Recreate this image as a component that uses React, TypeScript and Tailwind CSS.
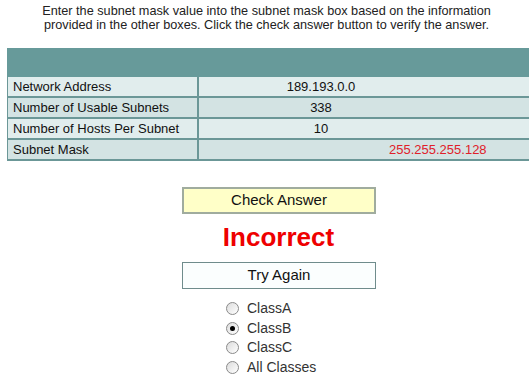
import { useState } from "react";

const rows = [
  { label: "Network Address", value: "189.193.0.0" },
  { label: "Number of Usable Subnets", value: "338" },
  { label: "Number of Hosts Per Subnet", value: "10" },
];

const classes = ["ClassA", "ClassB", "ClassC", "All Classes"];

function Radio({ checked }: { checked: boolean }) {
  return (
    <span className="w-[13px] h-[13px] rounded-full border border-[#8a8a8a] bg-gradient-to-br from-[#dcdcdc] to-white flex items-center justify-center">
      {checked && <span className="w-[5px] h-[5px] rounded-full bg-black" />}
    </span>
  );
}

export default function App() {
  const [picked, setPicked] = useState("ClassB");

  return (
    <div className="w-[529px] h-[379px] bg-white overflow-hidden font-['Liberation_Sans',Arial,sans-serif] text-[13px]">
      <p className="pt-[4px] pl-[4px] text-center text-[12.7px] leading-[14px] text-[#222]">
        Enter the subnet mask value into the subnet mask box based on the information
        <br />
        provided in the other boxes. Click the check answer button to verify the answer.
      </p>

      <div className="ml-[7px] mt-[16px] w-[530px]">
        <div className="h-[29px] bg-[#679a9a]" />
        {rows.map((r, i) => (
          <div
            key={r.label}
            className={`grid grid-cols-[192px_1fr] h-[21px] border-b-2 border-[#6b9797] ${
              i % 2 === 0 ? "bg-[#e1eded]" : "bg-[#d3e3e3]"
            }`}
          >
            <div className="border-l border-r-2 border-[#6b9797] pl-[5px] leading-[19px] text-[#111]">
              {r.label}
            </div>
            <div className="w-[244px] text-center leading-[19px] text-[#111]">{r.value}</div>
          </div>
        ))}
        <div className="grid grid-cols-[192px_1fr] h-[21px] border-b-2 border-[#6b9797] bg-[#d3e3e3]">
          <div className="border-l border-r-2 border-[#6b9797] pl-[5px] leading-[19px] text-[#111]">
            Subnet Mask
          </div>
          <div className="pl-[190px] leading-[19px] text-[#e0202a]">255.255.255.128</div>
        </div>
      </div>

      <div className="flex flex-col items-center">
        <button className="mt-[26px] ml-[29px] w-[194px] h-[27px] border-2 border-[#a0ac9e] bg-[#ffffc8] text-[15px] text-[#111]">
          Check Answer
        </button>
        <div className="mt-[8px] ml-[28px] text-[26px] font-bold leading-[30px] text-[#ee0000]">
          Incorrect
        </div>
        <button className="mt-[10px] ml-[29px] w-[194px] h-[27px] border border-[#6f8c8c] bg-[#fbfefe] text-[15px] text-[#111]">
          Try Again
        </button>
      </div>

      <div className="ml-[226px] mt-[10px] flex flex-col">
        {classes.map((c) => (
          <label
            key={c}
            onClick={() => setPicked(c)}
            className="flex items-center gap-[8px] h-[19.5px] text-[14px] text-[#333]"
          >
            <Radio checked={picked === c} />
            {c}
          </label>
        ))}
      </div>
    </div>
  );
}
